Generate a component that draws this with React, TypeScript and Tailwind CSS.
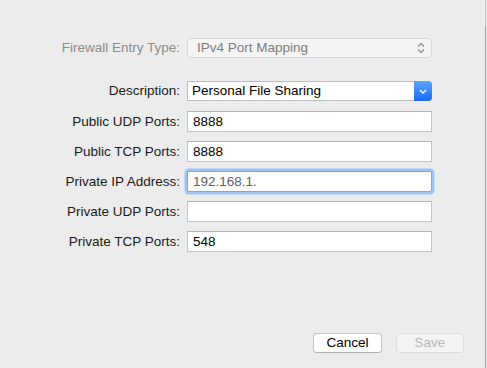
import React from "react";

const font = { fontFamily: '"Liberation Sans", Arial, sans-serif' };

function Label({ children, disabled }: { children: React.ReactNode; disabled?: boolean }) {
  return (
    <div
      className={`w-[180px] shrink-0 text-right text-[13.5px] leading-none ${
        disabled ? "text-[#8b8b8b]" : "text-[#1a1a1a]"
      }`}
    >
      {children}
    </div>
  );
}

function TextField({ value, focused, dim }: { value: string; focused?: boolean; dim?: boolean }) {
  return (
    <div
      className={`ml-[7px] w-[245px] h-[21px] bg-white flex items-center pl-[5px] text-[13.5px] leading-none ${
        focused
          ? "border border-[#78a6ea] rounded-[2px] shadow-[0_0_0_2.5px_#9ec3f5]"
          : "border border-[#c4c4c4] border-t-[#b3b3b3]"
      } ${dim ? "text-[#5f5f5f]" : "text-black"}`}
    >
      {value}
    </div>
  );
}

export default function App() {
  return (
    <div className="w-[487px] h-[368px] bg-[#ececec] flex overflow-hidden" style={font}>
      <div className="w-[485px] h-full flex flex-col">
        {/* Firewall Entry Type */}
        <div className="mt-[38px] flex items-center h-[20px]">
          <Label disabled>Firewall Entry Type:</Label>
          <div className="ml-[7px] w-[245px] h-[20px] bg-[#f4f4f4] border border-[#d6d6d6] rounded-[4px] flex items-center pl-[9px] pr-[6px] text-[13.5px] leading-none text-[#7d7d7d]">
            <span className="flex-1">IPv4 Port Mapping</span>
            <svg width="8" height="12" viewBox="0 0 8 12" fill="none" stroke="#8c8c8c" strokeWidth="1.2">
              <path d="M1 4.5 L4 1.5 L7 4.5" />
              <path d="M1 7.5 L4 10.5 L7 7.5" />
            </svg>
          </div>
        </div>

        {/* Description */}
        <div className="mt-[23px] flex items-center h-[20px]">
          <Label>Description:</Label>
          <div className="ml-[7px] w-[245px] h-[20px] bg-white border border-[#bdbdbd] rounded-r-[4px] flex items-stretch text-[13.5px] leading-none text-black">
            <span className="flex-1 flex items-center pl-[4px]">Personal File Sharing</span>
            <div className="w-[18px] -my-px -mr-px rounded-r-[4px] bg-gradient-to-b from-[#5aa6fb] to-[#1766f7] flex items-center justify-center">
              <svg width="8" height="5" viewBox="0 0 8 5" fill="none" stroke="white" strokeWidth="1.4">
                <path d="M1 1 L4 4 L7 1" />
              </svg>
            </div>
          </div>
        </div>

        {/* Text fields */}
        <div className="mt-[10px] flex flex-col gap-[9px]">
          <div className="flex items-center">
            <Label>Public UDP Ports:</Label>
            <TextField value="8888" />
          </div>
          <div className="flex items-center">
            <Label>Public TCP Ports:</Label>
            <TextField value="8888" />
          </div>
          <div className="flex items-center">
            <Label>Private IP Address:</Label>
            <TextField value="192.168.1." focused dim />
          </div>
          <div className="flex items-center">
            <Label>Private UDP Ports:</Label>
            <TextField value="" />
          </div>
          <div className="flex items-center">
            <Label>Private TCP Ports:</Label>
            <TextField value="548" />
          </div>
        </div>

        <div className="flex-1" />

        {/* Buttons */}
        <div className="mb-[15px] flex justify-end pr-[21px] gap-[14px]">
          <button className="w-[69px] h-[20px] bg-white border border-[#c6c6c6] border-b-[#b0b0b0] rounded-[4px] text-[13.5px] leading-none text-black">
            Cancel
          </button>
          <button className="w-[68px] h-[20px] bg-[#f3f3f3] border border-[#dcdcdc] rounded-[4px] text-[13.5px] leading-none text-[#b8b8b8]">
            Save
          </button>
        </div>
      </div>
      <div className="w-px h-full flex flex-col">
        <div className="h-[26px] bg-[#c4c4c4]" />
        <div className="flex-1 bg-[#a2a2a2]" />
      </div>
      <div className="w-px h-full bg-[#ececec]" />
    </div>
  );
}
